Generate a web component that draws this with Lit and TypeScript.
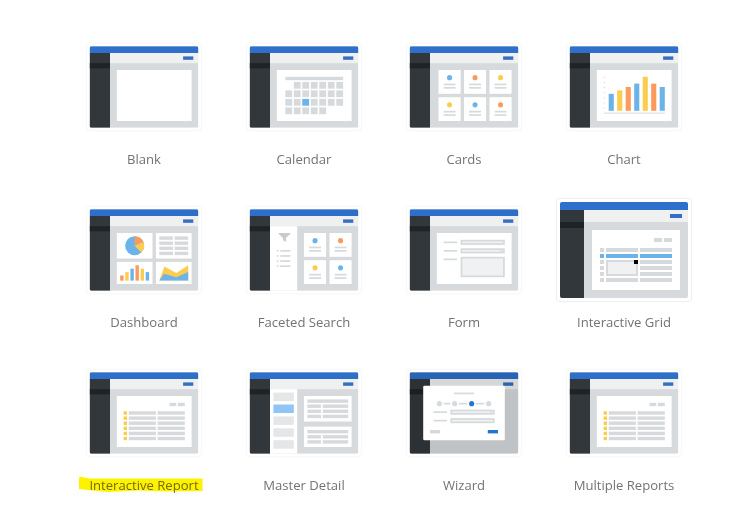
import { LitElement, html, svg, css, SVGTemplateResult } from "lit";
import { customElement, property } from "lit/decorators.js";
import { classMap } from "lit/directives/class-map.js";

const BLUE = "#6cb3ea";
const YELLOW = "#fbcc4d";
const ORANGE = "#fa9b5c";
const GREY = "#d6dadc";
const HEADER = "#2d6fcb";

const box = (x: number, y: number, w: number, h: number, fill = GREY) =>
  svg`<rect x=${x} y=${y} width=${w} height=${h} fill=${fill}></rect>`;
const panel = () => box(32, 28, 88, 60, "#fff");
const field = (x: number, y: number, w: number, h: number) =>
  svg`<rect x=${x + 1} y=${y + 1} width=${w - 2} height=${h - 2} fill="#f0f1f3" stroke=${GREY} stroke-width="2"></rect>`;
const card = (x: number, y: number, color: string) => svg`
  ${box(x, y, 26, 28, "#fff")}
  <circle cx=${x + 13} cy=${y + 9} r="3" fill=${color}></circle>
  ${box(x + 6, y + 16, 14, 2)}${box(x + 6, y + 20, 14, 2)}`;
const rows = [46, 52, 58, 64, 70, 76];

const calendar = () => {
  const cells: SVGTemplateResult[] = [];
  for (let r = 0; r < 4; r++)
    for (let c = 0; c < 7; c++) {
      if ((r === 0 && c === 0) || (r === 3 && c > 4)) continue;
      cells.push(box(42 + c * 10, 42 + r * 10, 8, 8, r === 2 && c === 2 ? BLUE : GREY));
    }
  return svg`${panel()}${box(42, 36, 68, 4)}${cells}`;
};

const cards = () => svg`
  ${card(34, 28, BLUE)}${card(64, 28, ORANGE)}${card(94, 28, YELLOW)}
  ${card(34, 60, YELLOW)}${card(64, 60, BLUE)}${card(94, 60, ORANGE)}`;

const chart = () => svg`${panel()}
  ${[36, 42, 48, 54, 60, 66, 72].map((y) => box(40, y, 2, 1.3, "#dfe2e4"))}
  ${[56, 52, 48, 44, 36, 44, 48].map((y, i) =>
    box(46 + i * 10, y, 6, 76 - y, [BLUE, YELLOW, ORANGE][i % 3]))}
  ${box(40, 78, 72, 1.5, "#e0e3e5")}`;

const dashboard = () => svg`
  ${box(32, 28, 42, 30, "#fff")}${box(78, 28, 42, 30, "#fff")}
  ${box(32, 62, 42, 26, "#fff")}${box(78, 62, 42, 26, "#fff")}
  <circle cx="53" cy="43" r="11.2" fill=${BLUE}></circle>
  <path d="M53 43V31.8A11.2 11.2 0 0 1 63.3 38.7Z" fill=${ORANGE}></path>
  <path d="M53 43L63.3 38.7A11.2 11.2 0 0 1 60.9 50.9Z" fill=${YELLOW}></path>
  ${[32, 38, 44, 50].map((y) => svg`${box(82, y, 16, 4)}${box(100, y, 16, 4)}`)}
  ${[78, 74, 70, 66, 70, 74].map((y, i) =>
    box(36 + i * 6, y, 4, 84 - y, [ORANGE, YELLOW, BLUE][i % 3]))}
  <path d="M82 84L88 67.5L102 75L116 66V84Z" fill=${YELLOW}></path>
  <path d="M82 84L87.5 76L102 80L116 74V84Z" fill=${BLUE}></path>`;

const faceted = () => svg`
  ${box(24, 20, 32, 76, "#fff")}
  <path d="M34 28H48V29L42.7 34V38.6L39.3 36.5V34L34 29Z" fill="#c9cccf"></path>
  ${[48, 54, 60, 66].map((y) => svg`${box(32, y, 2, 2)}${box(36, y, 12, 2)}`)}
  ${card(64, 28, BLUE)}${card(94, 28, ORANGE)}${card(64, 60, YELLOW)}${card(94, 60, BLUE)}`;

const form = () => svg`${panel()}
  ${[38, 48, 58].map((y) => box(40, y, 16, 2))}
  ${field(60, 36, 52, 6)}${field(60, 46, 52, 6)}${field(60, 56, 52, 24)}
  ${box(107, 48, 2, 2)}`;

const grid = () => svg`${panel()}
  ${box(94, 36, 8, 4)}${box(104, 36, 8, 4)}
  ${rows.map((y, i) => {
    const c = i === 1 ? BLUE : GREY;
    return svg`${box(40, y, 4, 4, c)}${box(80, y, 32, 4, c)}
      ${i < 2 || i === 5 ? box(46, y, 32, 4, c) : ""}`;
  })}
  ${field(46, 58, 32, 16)}${box(74, 58, 4, 4, "#000")}`;

const report = () => svg`${panel()}
  ${box(94, 36, 8, 4)}${box(104, 36, 8, 4)}
  ${rows.map((y) => svg`${box(40, y, 4, 4, YELLOW)}${box(46, y, 32, 4)}${box(80, y, 32, 4)}`)}`;

const master = () => svg`
  ${box(24, 20, 32, 76, "#fff")}
  ${[24, 38, 52, 66, 80].map((y, i) => box(28, y, 24, 10, i === 1 ? "#8fc6f5" : "#e4e6e7"))}
  ${box(64, 28, 56, 30, "#fff")}${box(64, 64, 56, 24, "#fff")}
  ${box(68, 32, 48, 4)}${box(68, 68, 48, 4)}
  ${[38, 44, 50, 74, 80].map((y) => svg`${box(68, y, 16, 4)}${box(86, y, 30, 4)}`)}`;

const wizard = () => svg`
  <rect width="128" height="96" fill="#000" fill-opacity=".1"></rect>
  <rect x="16" y="16" width="96" height="64" rx="1.5" fill="#fff"></rect>
  ${box(52, 24, 24, 2)}
  ${[35, 53, 73, 93].map((x, i) =>
    svg`<circle cx=${x} cy="37" r="3" fill=${i === 2 ? "#1f76d0" : GREY}></circle>`)}
  ${box(40, 36, 8, 2)}${box(58, 36, 10, 2)}${box(78, 36, 10, 2)}
  ${box(28, 46, 16, 2)}${box(28, 56, 16, 2)}
  ${field(48, 44, 52, 6)}${field(48, 54, 52, 6)}${box(95, 45, 1.5, 4)}
  ${box(24, 68, 12, 4)}${box(92, 68, 12, 4, "#1f76d0")}`;

interface PageType {
  label: string;
  art: () => SVGTemplateResult;
  active?: boolean;
  marked?: boolean;
}

const PAGES: PageType[] = [
  { label: "Blank", art: panel },
  { label: "Calendar", art: calendar },
  { label: "Cards", art: cards },
  { label: "Chart", art: chart },
  { label: "Dashboard", art: dashboard },
  { label: "Faceted Search", art: faceted },
  { label: "Form", art: form },
  { label: "Interactive Grid", art: grid, active: true },
  { label: "Interactive Report", art: report, marked: true },
  { label: "Master Detail", art: master },
  { label: "Wizard", art: wizard },
  { label: "Multiple Reports", art: report },
];

@customElement("page-type")
export class PageTypeTile extends LitElement {
  @property({ attribute: false }) page!: PageType;

  static styles = css`
    :host {
      display: flex;
      flex-direction: column;
      align-items: center;
    }
    .frame {
      box-sizing: border-box;
      width: 136px;
      height: 104px;
      padding: 3px;
      border: 1px solid #f4f4f4;
      border-radius: 3px;
      transform: scale(0.85);
      background: #fff;
    }
    .frame.active {
      transform: none;
      border-color: #efefef;
    }
    .art {
      display: block;
      width: 128px;
      height: 96px;
      border-radius: 2px;
      overflow: hidden;
    }
    .label {
      position: relative;
      margin-top: 10px;
      font: 13.1px/20px "Open Sans", "Noto Sans", sans-serif;
      color: #737373;
      white-space: nowrap;
    }
    .marker {
      position: absolute;
      left: 50%;
      top: 0;
      margin-left: -66px;
      mix-blend-mode: multiply;
    }
  `;

  render() {
    const { label, art, active, marked } = this.page;
    return html`
      <div class=${classMap({ frame: true, active: !!active })}>
        <svg class="art" viewBox="0 0 128 96">
          ${box(0, 0, 128, 96, GREY)}${box(24, 8, 104, 12, "#eff1f1")}
          ${box(0, 8, 24, 88, "#32373b")}${box(0, 20, 24, 6, "#1e2326")}
          ${box(0, 0, 128, 8, HEADER)}${box(110, 12, 12, 4, "#356ec4")}
          ${art()}
        </svg>
      </div>
      <div class="label">
        ${label}
        ${marked
          ? html`<svg class="marker" width="126" height="18" viewBox="0 0 126 18">
              <path d="M1 3L2 1.5L11 3.5H124.5V16L90 16.5L60 15.5L30 17L10 15L1 14Z" fill="#fff200"></path>
            </svg>`
          : ""}
      </div>
    `;
  }
}

@customElement("app-root")
export class AppRoot extends LitElement {
  static styles = css`
    :host {
      display: block;
      box-sizing: border-box;
      height: 524px;
      overflow: hidden;
      padding: 35px 0 0 64px;
      background: #fff;
    }
    .gallery {
      display: grid;
      grid-template-columns: repeat(4, 160px);
      grid-auto-rows: 163px;
    }
  `;

  render() {
    return html`<div class="gallery">
      ${PAGES.map((p) => html`<page-type .page=${p}></page-type>`)}
    </div>`;
  }
}
